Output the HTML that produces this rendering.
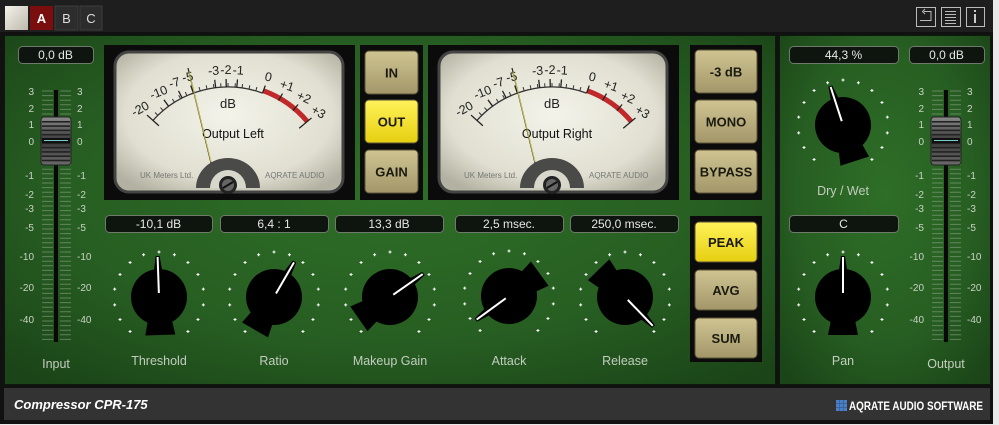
<!DOCTYPE html>
<html><head><meta charset="utf-8"><style>
html,body{margin:0;padding:0;background:#e9e9e9;width:999px;height:425px;overflow:hidden}
svg{display:block}
text{font-family:"Liberation Sans",sans-serif}
</style></head><body>
<svg id="s" width="999" height="425" viewBox="0 0 999 425" xmlns="http://www.w3.org/2000/svg">
<defs>
<radialGradient id="gr" cx="50%" cy="45%" r="70%">
<stop offset="0" stop-color="#2e6e27"/><stop offset="0.6" stop-color="#275e22"/><stop offset="1" stop-color="#1b4518"/></radialGradient>
<radialGradient id="face" cx="50%" cy="45%" r="65%">
<stop offset="0" stop-color="#f4f3ea"/><stop offset="0.7" stop-color="#e0dfd1"/><stop offset="1" stop-color="#b3b2a2"/></radialGradient>
<linearGradient id="btn" x1="0" y1="0" x2="0" y2="1"><stop offset="0" stop-color="#cfc491"/><stop offset="1" stop-color="#a3976a"/></linearGradient>
<linearGradient id="ybtn" x1="0" y1="0" x2="0" y2="1"><stop offset="0" stop-color="#fff25a"/><stop offset="1" stop-color="#e6cf10"/></linearGradient>
<linearGradient id="cap" x1="0" y1="0" x2="0" y2="1"><stop offset="0" stop-color="#8a8a8a"/><stop offset="0.5" stop-color="#3a3a3a"/><stop offset="1" stop-color="#6a6a6a"/></linearGradient>
<linearGradient id="tab" x1="0" y1="0" x2="1" y2="1"><stop offset="0" stop-color="#f4f2ea"/><stop offset="1" stop-color="#bdb9ad"/></linearGradient>
</defs>
<rect x="0" y="0" width="993" height="424" fill="#111"/>
<rect x="0" y="0" width="993" height="32" fill="#1e1e1e"/>
<rect x="5" y="6" width="23" height="24" fill="url(#tab)"/>
<rect x="30" y="6" width="23" height="24" fill="#7a0e0e"/>
<text x="41.5" y="23" fill="#fff" font-size="13" font-weight="bold" text-anchor="middle">A</text>
<rect x="55" y="6" width="23" height="24" fill="#2c2c2c" stroke="#3c3c3c"/>
<text x="66.5" y="23" fill="#ddd" font-size="13" text-anchor="middle">B</text>
<rect x="80" y="6" width="22" height="24" fill="#2c2c2c" stroke="#3c3c3c"/>
<text x="91" y="23" fill="#ddd" font-size="13" text-anchor="middle">C</text>
<g fill="none" stroke="#bbb" stroke-width="1">
<rect x="916.5" y="7.5" width="19" height="19"/><rect x="941.5" y="7.5" width="19" height="19"/><rect x="966.5" y="7.5" width="18" height="19"/>
<path d="M920 20.5h11v-9h-7M925 9l-2.5 2.5 2.5 2.5"/>
<path d="M945 11.5h11M945 14.5h11M945 17.5h11M945 20.5h11M945 23.5h11"/>
</g>
<rect x="974" y="14" width="2" height="9" fill="#ccc"/><rect x="974" y="10" width="2" height="2" fill="#ccc"/>
<rect x="4.5" y="35.5" width="771" height="349" fill="url(#gr)" stroke="#0c1a0b"/>
<rect x="779.5" y="35.5" width="211" height="349" fill="url(#gr)" stroke="#0c1a0b"/>
<rect x="4" y="388" width="986" height="32" fill="#333"/>
<text x="14" y="409" fill="#fff" font-size="13" font-weight="bold" font-style="italic">Compressor CPR-175</text>
<g fill="#4a7fc6"><rect x="836" y="400" width="11" height="11"/></g>
<g stroke="#33558a" stroke-width=".6"><path d="M839.7 400v11M843.3 400v11M836 403.7h11M836 407.3h11"/></g>
<text x="849" y="410" fill="#fff" font-size="12" font-weight="bold" textLength="134" lengthAdjust="spacingAndGlyphs">AQRATE AUDIO SOFTWARE</text>
<g id="dyn"></g>
</svg>
<script>
var s=document.getElementById('dyn'),h='';
function box(x,y,w,t){h+='<rect x="'+(x+.5)+'" y="'+(y+.5)+'" width="'+w+'" height="17" rx="4" fill="#0e150e" stroke="#6f7a6c"/><text x="'+(x+w/2)+'" y="'+(y+13)+'" fill="#e6e6e6" font-size="12" text-anchor="middle">'+t+'</text>';}
function lbl(x,y,t){h+='<text x="'+x+'" y="'+y+'" fill="#c3cdbf" font-size="12.5" text-anchor="middle">'+t+'</text>';}
function btn(x,y,w,hh,t,on){h+='<rect x="'+x+'" y="'+y+'" width="'+w+'" height="'+hh+'" rx="4" fill="url(#'+(on?'ybtn':'btn')+')" stroke="#5a5236"/><text x="'+(x+w/2)+'" y="'+(y+hh/2+5)+'" fill="#1a1a10" font-size="13" font-weight="bold" text-anchor="middle">'+t+'</text>';}
function knob(cx,cy,a){
 for(var i=0;i<15;i++){var an=(-140+i*20)*Math.PI/180;var x=cx+45*Math.sin(an),y=cy-45*Math.cos(an);h+='<path d="M'+(x-1.5)+' '+y+'h3M'+x+' '+(y-1.5)+'v3" stroke="#fff" stroke-width="1"/>';}
 h+='<g transform="translate('+cx+' '+cy+') rotate('+a+')"><circle r="28" fill="#000"/><path d="M-4 -27L-2 -41H2L4 -27Z" fill="#000"/><path d="M-12 23L-15 38H15L12 23Z" fill="#000"/><line x1="0" y1="-4" x2="0" y2="-40" stroke="#fff" stroke-width="2"/></g>';}
function slider(cx){
 var labs=[[3,91],[2,108],[1,124],[0,141],[-1,175],[-2,194],[-3,208],[-5,227],[-10,256],[-20,287],[-40,319]];
 for(var y=91;y<=340;y+=4.6){h+='<path d="M'+(cx-14)+' '+y.toFixed(1)+'h11M'+(cx+4)+' '+y.toFixed(1)+'h11" stroke="#9fb29a" stroke-opacity=".5"/>';}
 labs.forEach(function(l){h+='<text x="'+(cx-22)+'" y="'+(l[1]+4)+'" fill="#c9d3c4" font-size="10" text-anchor="end">'+l[0]+'</text><text x="'+(cx+21)+'" y="'+(l[1]+4)+'" fill="#c9d3c4" font-size="10">'+l[0]+'</text>';});
 h+='<rect x="'+(cx-2)+'" y="90" width="4" height="252" fill="#080808"/>';
 h+='<rect x="'+(cx-15)+'" y="117" width="30" height="48" rx="3" fill="url(#cap)" stroke="#222"/>';
 for(var k=0;k<10;k++){h+='<rect x="'+(cx-14)+'" y="'+(121+k*4.3)+'" width="28" height="1.6" fill="#222"/>';}
 h+='<rect x="'+(cx-14)+'" y="138" width="28" height="5" fill="#111"/><rect x="'+(cx-12)+'" y="140" width="24" height="1" fill="#7cc"/>';
}
function meter(ox,name){
 h+='<rect x="'+ox+'" y="45" width="251" height="155" fill="#0b0b0b"/>';
 h+='<rect x="'+(ox+11)+'" y="52" width="228" height="140" rx="14" fill="url(#face)" stroke="#444" stroke-width="3"/>';
 var px=ox+124,py=188,r=101;
 function pt(a,rr){a=a*Math.PI/180;return [px+rr*Math.sin(a),py-rr*Math.cos(a)];}
 var a0=pt(-48,r),a1=pt(20,r);
 h+='<path d="M'+a0[0]+' '+a0[1]+'A'+r+' '+r+' 0 0 1 '+a1[0]+' '+a1[1]+'" fill="none" stroke="#333" stroke-width="1.3"/>';
 var rb=pt(20,r+2.5),re=pt(50,r+2.5);
 h+='<path d="M'+rb[0]+' '+rb[1]+'A'+(r+2.5)+' '+(r+2.5)+' 0 0 1 '+re[0]+' '+re[1]+'" fill="none" stroke="#c0282a" stroke-width="5"/>';
 var ticks=[[-48,'-20'],[-36,'-10'],[-27,'-7'],[-20,'-5'],[-7,'-3'],[-1,'-2'],[5,'-1'],[20,'0'],[30,'+1'],[40,'+2'],[50,'+3']];
 for(var t=-44;t<20;t+=4){var p1=pt(t,r),p2=pt(t,r+4);h+='<line x1="'+p1[0]+'" y1="'+p1[1]+'" x2="'+p2[0]+'" y2="'+p2[1]+'" stroke="#333"/>';}
 ticks.forEach(function(tk){var p1=pt(tk[0],r-(tk[0]==-48||tk[0]==50?8:0)),p2=pt(tk[0],r+8),q=pt(tk[0],r+17);
  h+='<line x1="'+p1[0]+'" y1="'+p1[1]+'" x2="'+p2[0]+'" y2="'+p2[1]+'" stroke="#222" stroke-width="1.3"/>';
  h+='<text x="'+q[0]+'" y="'+(q[1]+4)+'" fill="#222" font-size="12.5" text-anchor="middle" transform="rotate('+(tk[0]*0.6)+' '+q[0]+' '+q[1]+')">'+tk[1]+'</text>';});
 h+='<text x="'+(ox+124)+'" y="108" fill="#222" font-size="13" text-anchor="middle">dB</text>';
 h+='<text x="'+(ox+129)+'" y="138" fill="#111" font-size="12.5" text-anchor="middle">'+name+'</text>';
 h+='<line x1="'+(ox+108)+'" y1="167" x2="'+(ox+84)+'" y2="68" stroke="#222" stroke-width="1.2"/><line x1="'+(ox+107)+'" y1="162" x2="'+(ox+85)+'" y2="72" stroke="#e8e040" stroke-width=".7"/>';
 h+='<text x="'+(ox+36)+'" y="178" fill="#777" font-size="8">UK Meters Ltd.</text><text x="'+(ox+161)+'" y="178" fill="#777" font-size="8">AQRATE AUDIO</text>';
 h+='<path d="M'+(ox+92)+' 188A32 30 0 0 1 '+(ox+156)+' 188Z" fill="#4a4a48"/>';
 h+='<path d="M'+(ox+106)+' 188A18 18 0 0 1 '+(ox+142)+' 188Z" fill="#d8d7cc"/>';
 h+='<circle cx="'+(ox+124)+'" cy="185" r="9" fill="#222"/><circle cx="'+(ox+124)+'" cy="185" r="6" fill="#666"/><line x1="'+(ox+119)+'" y1="188" x2="'+(ox+129)+'" y2="182" stroke="#111" stroke-width="2"/>';
}
box(18,46,75,'0,0 dB');
slider(56);lbl(56,368,'Input');
meter(104,'Output Left');
h+='<rect x="360" y="45" width="63" height="155" fill="#0b0b0b"/>';
btn(365,51,53,43,'IN',0);btn(365,100,53,43,'OUT',1);btn(365,150,53,43,'GAIN',0);
meter(428,'Output Right');
h+='<rect x="690" y="45" width="72" height="155" fill="#0b0b0b"/>';
btn(695,50,62,43,'-3 dB',0);btn(695,100,62,43,'MONO',0);btn(695,150,62,43,'BYPASS',0);
h+='<rect x="690" y="216" width="72" height="146" fill="#0b0b0b"/>';
btn(695,222,62,40,'PEAK',1);btn(695,270,62,40,'AVG',0);btn(695,318,62,40,'SUM',0);
box(105,215,107,'-10,1 dB');box(220,215,108,'6,4 : 1');box(335,215,108,'13,3 dB');box(455,215,108,'2,5 msec.');box(570,215,108,'250,0 msec.');
knob(159,297,-2);knob(274,297,30);knob(390,297,55);knob(509,296,-126);knob(625,297,136);
lbl(159,365,'Threshold');lbl(274,365,'Ratio');lbl(390,365,'Makeup Gain');lbl(509,365,'Attack');lbl(625,365,'Release');
box(789,46,109,'44,3 %');box(909,46,75,'0,0 dB');
knob(843,125,-18);lbl(843,195,'Dry / Wet');
box(789,215,109,'C');knob(843,297,0);lbl(843,365,'Pan');
slider(946);lbl(946,368,'Output');
s.innerHTML=h;
</script>
</body></html>
